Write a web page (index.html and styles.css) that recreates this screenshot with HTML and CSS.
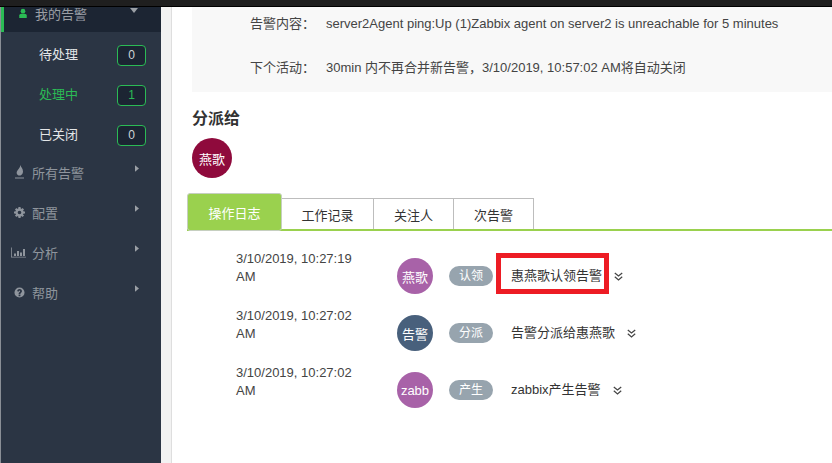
FILE: index.html
```html
<!DOCTYPE html>
<html>
<head>
  <meta charset="utf-8">
  <link rel="stylesheet" href="styles.css">
</head>
<body>
  <div class="topbar"></div>
  <div class="layout">
    <div class="sidebar">
      <div class="nav-head">
        <svg class="nav-icon green" viewBox="0 0 12 12"><circle cx="6" cy="3.2" r="2.8"/><path d="M1.5 11.5V8.5Q1.5 6.2 4 6.2H8Q10.5 6.2 10.5 8.5V11.5Z"/></svg>
        <span>我的告警</span>
        <svg class="caret-down" viewBox="0 0 8 5"><path d="M0 0H8L4 5Z"/></svg>
      </div>
      <div class="sub"><span>待处理</span><b class="count">0</b></div>
      <div class="sub active"><span>处理中</span><b class="count">1</b></div>
      <div class="sub"><span>已关闭</span><b class="count">0</b></div>
      <div class="nav">
        <svg class="nav-icon flame" viewBox="0 0 11 14"><path d="M6.5 0C7 2.500 9 3.500 9 6.500C9 8.500 8 9.800 6.500 10.500H4.500C3 9.800 2.300 8.300 2.800 6.800C3.500 4.800 6.200 3 6.500 0Z"/><path d="M1 12.500H10V13.500H1Z"/></svg>
        <span>所有告警</span>
        <svg class="caret" viewBox="0 0 5 8"><path d="M0 0V8L5 4Z"/></svg>
      </div>
      <div class="nav">
        <svg class="nav-icon" viewBox="0 0 12 12"><circle cx="6" cy="6" r="3.300" fill="none" stroke="currentColor" stroke-width="2.600"/><path d="M4.800 0H7.200V2.500H4.800ZM4.800 9.500H7.200V12H4.800ZM0 4.800H2.500V7.200H0ZM9.500 4.800H12V7.200H9.500Z"/><path d="M1 2.700L2.700 1L4 2.800L2.800 4ZM9.300 1L11 2.700L9.200 4L8 2.800ZM1 9.300L2.800 8L4 9.200L2.700 11ZM8 9.200L9.200 8L11 9.300L9.300 11Z"/></svg>
        <span>配置</span>
        <svg class="caret" viewBox="0 0 5 8"><path d="M0 0V8L5 4Z"/></svg>
      </div>
      <div class="nav">
        <svg class="nav-icon wide" viewBox="0 0 15 10"><path d="M0 0H.8V9.200H15V10H0Z"/><path d="M3 6H5V8.500H3ZM6 3.500H8V8.500H6ZM9 5H11V8.500H9ZM12 1.500H14V8.500H12Z"/></svg>
        <span>分析</span>
        <svg class="caret" viewBox="0 0 5 8"><path d="M0 0V8L5 4Z"/></svg>
      </div>
      <div class="nav">
        <svg class="nav-icon" viewBox="0 0 12 12"><path fill-rule="evenodd" d="M6 .5A5.500 5.500 0 1 0 6 11.500A5.500 5.500 0 1 0 6 .5ZM5 8.300H7V10H5ZM3.500 4.500C3.500 1.500 8.700 1.500 8.700 4.500C8.700 6 7 6.200 7 7.500H5C5 5.500 6.700 5.300 6.700 4.500C6.700 3.700 5.500 3.700 5.300 4.800Z"/></svg>
        <span>帮助</span>
        <svg class="caret" viewBox="0 0 5 8"><path d="M0 0V8L5 4Z"/></svg>
      </div>
    </div>
    <div class="gutter"></div>
    <div class="content">
      <div class="info">
        <div class="info-row"><span class="info-label">告警内容：</span><span>server2Agent ping:Up (1)Zabbix agent on server2 is unreachable for 5 minutes</span></div>
        <div class="info-row"><span class="info-label">下个活动：</span><span>30min 内不再合并新告警，3/10/2019, 10:57:02 AM将自动关闭</span></div>
      </div>
      <h3 class="assign-title">分派给</h3>
      <div class="avatar assign">燕歌</div>
      <div class="tabs">
        <div class="tab on">操作日志</div>
        <div class="tab first">工作记录</div>
        <div class="tab">关注人</div>
        <div class="tab">次告警</div>
      </div>
      <div class="log">
        <div class="log-row">
          <div class="log-time">3/10/2019, 10:27:19 AM</div>
          <div class="avatar small purple">燕歌</div>
          <div class="pill">认领</div>
          <div class="msg mark">惠燕歌认领告警</div>
          <svg class="more" viewBox="0 0 8 8"><path d="M.7 .8L4 3.500L7.300 .8M.7 4.300L4 7L7.300 4.300"/></svg>
        </div>
        <div class="log-row">
          <div class="log-time">3/10/2019, 10:27:02 AM</div>
          <div class="avatar small navy">告警</div>
          <div class="pill">分派</div>
          <div class="msg">告警分派给惠燕歌</div>
          <svg class="more" viewBox="0 0 8 8"><path d="M.7 .8L4 3.500L7.300 .8M.7 4.300L4 7L7.300 4.300"/></svg>
        </div>
        <div class="log-row">
          <div class="log-time">3/10/2019, 10:27:02 AM</div>
          <div class="avatar small purple">zabb</div>
          <div class="pill">产生</div>
          <div class="msg">zabbix产生告警</div>
          <svg class="more" viewBox="0 0 8 8"><path d="M.7 .8L4 3.500L7.300 .8M.7 4.300L4 7L7.300 4.300"/></svg>
        </div>
      </div>
    </div>
  </div>
</body>
</html>
```

FILE: styles.css
```css
* { box-sizing: border-box; }
html, body { height: 100%; }
body {
  margin: 0;
  height: 463px;
  overflow: hidden;
  display: flex;
  flex-direction: column;
  font-family: "Liberation Sans", "Noto Sans CJK SC", sans-serif;
  font-size: 13px;
  color: #333;
  background: #fff;
}
.topbar { height: 7px; background: #1f1f1f; border-bottom: 1px solid #000; }
.layout { flex: 1; display: flex; min-height: 0; }

.sidebar {
  width: 161px;
  background: #2b3544;
  border-left: 1px solid #8a8f96;
  color: #fff;
}
.nav-head {
  height: 25px;
  background: #1c2533;
  border-left: 3px solid #2bbb55;
  display: flex;
  align-items: center;
  padding: 0 0 13px 14px;
  color: #9b9fa5;
}
.nav {
  height: 40px;
  display: flex;
  align-items: center;
  padding-left: 13px;
  color: #8f959d;
}
.sub + .nav { margin-top: -1px; }
.nav-head span, .nav span { margin-left: 7px; flex: none; }
.nav-icon { width: 11px; height: 11px; fill: currentColor; flex: none; }
.nav-icon.flame { height: 14px; }
.nav-icon.wide { width: 15px; margin-left: -3px; margin-right: -1px; }
.nav-icon.green { fill: #2bbb55; width: 10px; height: 11px; }
.caret { width: 4px; height: 7px; fill: #9ba0a6; margin-left: auto; margin-right: 22px; margin-top: -8px; }
.caret-down { width: 8px; height: 5px; fill: #9ba0a6; margin-left: auto; margin-right: 23px; margin-top: -5px; }
.sub {
  height: 40px;
  display: flex;
  align-items: center;
  padding: 0 15px 0 38px;
  justify-content: space-between;
  color: #e4e6e8;
}
.nav-head + .sub { margin-top: 1px; }
.sub.active { color: #2bbb55; }
.count {
  width: 29px;
  height: 21px;
  margin-top: 4px;
  border: 1px solid #2bbb55;
  border-radius: 4px;
  background: #1c2533;
  color: #cfd3d6;
  font-size: 12px;
  font-weight: normal;
  text-align: center;
  line-height: 19px;
}
.sub.active .count { color: #2bbb55; }

.gutter { width: 11px; background: #f2f2f2; border-right: 1px solid #dedede; }
.content { flex: 1; min-width: 0; padding-left: 20px; }

.info { height: 85px; background: #f8f8f8; padding: 6px 0 0 58px; }
.info-row { display: flex; height: 22px; line-height: 22px; margin-bottom: 22px; color: #444; white-space: nowrap; }
.info-label { width: 76px; flex: none; }

.assign-title { margin: 17px 0 0; font-size: 16px; line-height: 20px; font-weight: bold; color: #333; }
.avatar {
  border-radius: 50%;
  color: #fff;
  display: flex;
  align-items: center;
  justify-content: center;
  flex: none;
}
.assign { width: 40px; height: 40px; background: #8f0a3c; margin-top: 9px; }
.small { width: 36px; height: 36px; margin-top: 10px; }
.purple { background: #a862a8; }
.navy { background: #48607c; }

.tabs { display: flex; align-items: flex-end; height: 38px; margin: 15px 0 0 -5px; border-bottom: 2px solid #9ad14e; }
.tab {
  width: 80px;
  height: 31px;
  border: 1px solid #bdbdbd;
  border-left: 0;
  border-bottom: 0;
  display: flex;
  align-items: center;
  justify-content: center;
  color: #333;
}
.tab.first { width: 92px; }
.tab.on {
  width: 95px;
  height: 38px;
  background: #9ad14e;
  border: 1px solid #c6cfc0;
  border-radius: 3px;
  color: #fff;
  margin-bottom: -2px;
  position: relative;
}

.log { padding: 17px 0 0 44px; }
.log-row { display: flex; align-items: flex-start; height: 57px; }
.log-time { width: 161px; flex: none; margin-top: 2px; line-height: 18px; padding-right: 40px; color: #444; }
.pill {
  width: 44px;
  height: 20px;
  margin: 18px 0 0 16px;
  border-radius: 10px;
  background: #97a4ae;
  color: #fff;
  font-size: 12px;
  text-align: center;
  line-height: 20px;
  flex: none;
}
.msg { margin: 5px 0 0 3px; padding: 5px 2px 0 10px; border: 5px solid transparent; height: 41px; line-height: 26px; white-space: nowrap; }
.msg.mark { border-color: #ed1c24; }
.more { width: 9px; height: 9px; margin: 24px 0 0 5px; fill: none; stroke: #444; stroke-width: 1.1; flex: none; }
```
